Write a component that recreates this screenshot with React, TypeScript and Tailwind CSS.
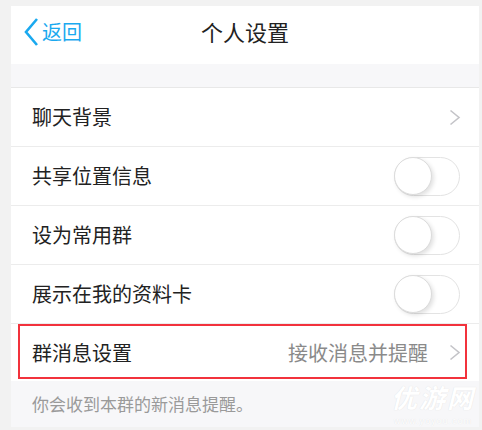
import React from "react";

const font = "font-['Noto_Sans_CJK_SC','Noto_Sans',sans-serif]";

const Chevron = () => (
  <svg width="12" height="17" viewBox="0 0 12 17" fill="none">
    <path d="M1.5 1.5 L10 8.5 L1.5 15.5" stroke="#c4c4c8" strokeWidth="1.6" />
  </svg>
);

const Toggle = () => (
  <div className="relative w-[66px] h-[39px] rounded-full border-[1.5px] border-[#e3e3e3] bg-white">
    <div className="absolute left-[-1px] top-[-1px] w-[38px] h-[38px] rounded-full bg-white border border-[#dcdcdc] shadow-[2px_2px_4px_rgba(0,0,0,0.12)]"></div>
  </div>
);

const Row = ({ label, right }: { label: string; right: React.ReactNode }) => (
  <div className="h-[59px] flex items-center justify-between pl-[21px] pr-[19px] border-b border-[#ececec] bg-white">
    <span className="text-[20px] text-[#222]">{label}</span>
    {right}
  </div>
);

const App = () => {
  return (
    <div className={`w-[482px] h-[430px] bg-[#f2f2f2] pl-[11px] pr-[3px] pt-[6px] ${font}`}>
      <div className="relative w-[468px] h-[421px] flex flex-col bg-[#f7f7f9]">
        <div className="h-[58px] bg-white flex items-center pb-[6px] relative">
          <div className="flex items-center pl-[12px] text-[#1aa9ef]">
            <svg width="16" height="30" viewBox="0 0 16 30" fill="none">
              <path d="M14 2 L3 15 L14 28" stroke="#1aa9ef" strokeWidth="2.6" />
            </svg>
            <span className="text-[20px] ml-[3px]">返回</span>
          </div>
          <div className="absolute left-0 right-0 text-center text-[22px] text-[#222] top-[9px]">个人设置</div>
        </div>
        <div className="h-[24px] border-b border-[#e8e8e8]"></div>
        <Row label="聊天背景" right={<div className="mr-[-1px]"><Chevron /></div>} />
        <Row label="共享位置信息" right={<Toggle />} />
        <Row label="设为常用群" right={<Toggle />} />
        <Row label="展示在我的资料卡" right={<Toggle />} />
        <div className="relative h-[57px] flex items-center justify-between pl-[21px] pr-[18px] bg-white">
          <span className="text-[20px] text-[#222]">群消息设置</span>
          <div className="flex items-center gap-[21px]">
            <span className="text-[20px] text-[#8a8a8a]">接收消息并提醒</span>
            <Chevron />
          </div>
          <div className="absolute left-[7px] right-[12px] top-0 bottom-[2px] border-2 border-[#f2323c]"></div>
        </div>
        <div className="flex-1 flex items-center pl-[21px]">
          <span className="text-[17px] text-[#9a9a9a]">你会收到本群的新消息提醒。</span>
        </div>
        <div className="absolute right-[4px] bottom-[1px] flex flex-col items-center text-white [text-shadow:0_0_1px_rgba(0,0,0,0.12)]">
          <span className="text-[26px] leading-[38px] italic font-bold tracking-[2px]">优游网</span>
          <span className="text-[9px] leading-[10px] tracking-[1px] font-['Liberation_Sans',sans-serif]">www.yoyou.com</span>
        </div>
      </div>
    </div>
  );
};

export default App;
